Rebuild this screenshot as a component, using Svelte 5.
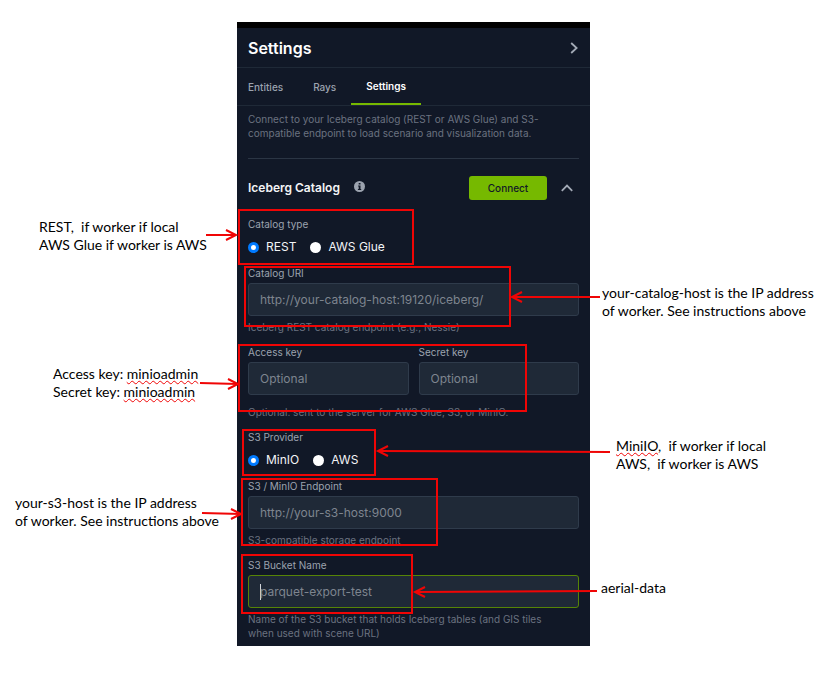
<script lang="ts">
  type Note = {
    id: string,
    offset: number,
    top: number,
    lines: { text: string, misspelt?: boolean }[][]
  }

  const tabs = ['Entities', 'Rays', 'Settings'];
  let activeTab = $state('Settings');
  let open = $state(true);

  let catalogType = $state('rest');
  let provider = $state('minio');
  let catalogUri = $state('');
  let accessKey = $state('');
  let secretKey = $state('');
  let endpoint = $state('');
  let bucket = $state('');

  // all marks are measured from the top left corner of the panel
  const boxes = [
    { x: 2, y: 188, w: 174, h: 54 },
    { x: 8, y: 245, w: 265, h: 59 },
    { x: 2, y: 323, w: 287, h: 66 },
    { x: 6, y: 408, w: 132, h: 45 },
    { x: 5, y: 457, w: 195, h: 66 },
    { x: 5, y: 533, w: 170, h: 58 }
  ];

  const arrows = [
    { from: [-31, 213], to: [-1, 213] },
    { from: [363, 275], to: [275, 275] },
    { from: [-37, 361], to: [1, 362] },
    { from: [373, 430], to: [141, 429] },
    { from: [-35, 491], to: [4, 492] },
    { from: [360, 569], to: [178, 570] }
  ];

  const notes: Note[] = [
    { id: 'type', offset: -198, top: 196, lines: [[{ text: 'REST,  if worker if local' }], [{ text: 'AWS Glue if worker is AWS' }]] },
    { id: 'keys', offset: -184, top: 343, lines: [[{ text: 'Access key: ' }, { text: 'minioadmin', misspelt: true }], [{ text: 'Secret key: ' }, { text: 'minioadmin', misspelt: true }]] },
    { id: 's3', offset: -222, top: 472, lines: [[{ text: 'your-s3-host is the IP address' }], [{ text: 'of worker. See instructions above' }]] },
    { id: 'uri', offset: 365, top: 262, lines: [[{ text: 'your-catalog-host is the IP address' }], [{ text: 'of worker. See instructions above' }]] },
    { id: 'provider', offset: 379, top: 415, lines: [[{ text: 'MiniIO', misspelt: true }, { text: ',  if worker if local' }], [{ text: 'AWS,  if worker is AWS' }]] },
    { id: 'bucket', offset: 364, top: 557, lines: [[{ text: 'aerial-data' }]] }
  ];

  function head (to: number[], from: number[]) {
    const back = to[0] > from[0] ? -10 : 10;
    return `M${to[0] + back} ${to[1] - 5}L${to[0]} ${to[1]}L${to[0] + back} ${to[1] + 5}`;
  }
</script>

<main class="figure">
  <section class="panel">
    <header class="header">
      <h1>Settings</h1>
      <button class="icon_button" aria-label="Collapse panel">
        <svg width="8" height="12" viewBox="0 0 8 12"><path d="M1.2 1L6.6 6L1.2 11" /></svg>
      </button>
    </header>

    <nav class="tabs">
      {#each tabs as tab (tab)}
      <button class="tab" class:active={activeTab === tab} onclick={() => activeTab = tab}>{tab}</button>
      {/each}
    </nav>

    <div class="body">
      <p class="help intro">Connect to your Iceberg catalog (REST or AWS Glue) and S3-compatible endpoint to load scenario and visualization data.</p>

      <div class="section_head">
        <h2>Iceberg Catalog</h2>
        <svg class="info" width="11" height="11" viewBox="0 0 11 11">
          <circle cx="5.5" cy="5.5" r="5.5" />
          <path d="M4.7 2h1.8v1.5H4.7zM4.1 4.5h2.4v3.4h.7v1H3.9v-1h.8V5.5h-.6z" />
        </svg>
        <button class="connect">Connect</button>
        <button class="icon_button" aria-label="Toggle section" onclick={() => open = !open}>
          <svg width="12" height="8" viewBox="0 0 12 8"><path d="M.8 6.8L6 1.6L11.2 6.8" /></svg>
        </button>
      </div>

      {#if open}
      <form class="fields">
        <fieldset>
          <legend>Catalog type</legend>
          <div class="radios">
            <label><input type="radio" name="catalogType" value="rest" bind:group={catalogType}>REST</label>
            <label><input type="radio" name="catalogType" value="glue" bind:group={catalogType}>AWS Glue</label>
          </div>
        </fieldset>

        <div class="field">
          <label for="uri">Catalog URI</label>
          <input type="text" id="uri" placeholder="http://your-catalog-host:19120/iceberg/" bind:value={catalogUri}>
          <p class="help">Iceberg REST catalog endpoint (e.g., Nessie)</p>
        </div>

        <div class="keys">
          <div class="pair">
            <div class="field">
              <label for="access">Access key</label>
              <input type="text" id="access" placeholder="Optional" bind:value={accessKey}>
            </div>
            <div class="field">
              <label for="secret">Secret key</label>
              <input type="text" id="secret" placeholder="Optional" bind:value={secretKey}>
            </div>
          </div>
          <p class="help">Optional: sent to the server for AWS Glue, S3, or MinIO.</p>
        </div>

        <fieldset>
          <legend>S3 Provider</legend>
          <div class="radios">
            <label><input type="radio" name="provider" value="minio" bind:group={provider}>MinIO</label>
            <label><input type="radio" name="provider" value="aws" bind:group={provider}>AWS</label>
          </div>
        </fieldset>

        <div class="field">
          <label for="endpoint">S3 / MinIO Endpoint</label>
          <input type="text" id="endpoint" placeholder="http://your-s3-host:9000" bind:value={endpoint}>
          <p class="help">S3-compatible storage endpoint</p>
        </div>

        <div class="field">
          <label for="bucket">S3 Bucket Name</label>
          <input type="text" id="bucket" class="current" placeholder="parquet-export-test" bind:value={bucket}>
          <p class="help">Name of the S3 bucket that holds Iceberg tables (and GIS tiles when used with scene URL)</p>
        </div>
      </form>
      {/if}
    </div>
  </section>

  <svg class="marks" aria-hidden="true">
    {#each boxes as box}
    <rect x={box.x} y={box.y} width={box.w} height={box.h} />
    {/each}
    {#each arrows as { from, to }}
    <path d={`M${from[0]} ${from[1]}L${to[0]} ${to[1]}`} />
    <path d={head(to, from)} />
    {/each}
  </svg>

  {#each notes as note (note.id)}
  <p class="note" style="left: {note.offset}px; top: {note.top}px">
    {#each note.lines as line}
    <span class="line">{#each line as part}<span class:misspelt={part.misspelt}>{part.text}</span>{/each}</span>
    {/each}
  </p>
  {/each}
</main>

<style>
  :global(body) {
    background: #fff;
  }

  .figure {
    position: relative;
    width: 100%;
    max-width: 353px;
    margin: 22px auto 0;
    font-family: Inter, "Liberation Sans", sans-serif;
  }

  .panel {
    border-top: 6px solid #000;
    background: #111827;
    color: #fff;
  }

  h1, h2, p, fieldset, legend {
    margin: 0;
    padding: 0;
    border: 0;
  }

  button {
    padding: 0;
    border: 0;
    background: none;
    font-family: inherit;
    cursor: pointer;
  }

  .header {
    display: flex;
    align-items: center;
    justify-content: space-between;
    height: 39px;
    padding: 0 12px 0 11px;
    border-bottom: 1px solid #1f2937;
  }

  h1 {
    font-size: 16px;
    line-height: 20px;
    font-weight: 600;
  }

  .icon_button {
    display: flex;
  }

  .icon_button path {
    fill: none;
    stroke: #a3aab6;
    stroke-width: 1.8;
  }

  .tabs {
    display: flex;
    height: 37px;
    padding-left: 11px;
    border-bottom: 1px solid #1f2937;
  }

  .tab {
    padding: 0 15px;
    color: #9ca3af;
    font-size: 10px;
    font-weight: 500;
  }

  .tab:first-child {
    padding-left: 0;
  }

  .tab.active {
    border-bottom: 2px solid #76b900;
    color: #fff;
    font-weight: 600;
  }

  .body {
    padding: 6px 11px;
  }

  .help {
    padding-right: 14px;
    color: #6b7280;
    font-size: 10px;
    line-height: 14px;
  }

  .intro {
    padding-bottom: 18px;
    border-bottom: 1px solid #2b3544;
  }

  .section_head {
    display: flex;
    align-items: center;
    padding: 17px 6px 17px 0;
  }

  h2 {
    font-size: 12px;
    line-height: 16px;
    font-weight: 600;
    color: #f3f4f6;
  }

  .info {
    margin: 0 auto 3px 14px;
  }

  .info circle {
    fill: #9ca3af;
  }

  .info path {
    fill: #111827;
  }

  .connect {
    width: 78px;
    height: 24px;
    margin-right: 14px;
    border-radius: 3px;
    background: #76b900;
    color: #111827;
    font-size: 10px;
    font-weight: 500;
  }

  .fields {
    display: flex;
    flex-direction: column;
    gap: 11px;
  }

  .field {
    display: flex;
    flex-direction: column;
    min-width: 0;
  }

  .field label, legend {
    color: #9ca3af;
    font-size: 10px;
    line-height: 14px;
  }

  .field .help {
    margin-top: 4px;
  }

  .keys .help {
    margin-top: 10px;
  }

  .radios {
    display: flex;
    gap: 14px;
    margin-top: 8px;
  }

  .radios label {
    display: flex;
    align-items: center;
    gap: 7px;
    color: #f3f4f6;
    font-size: 12px;
    line-height: 16px;
  }

  input[type="radio"] {
    appearance: none;
    width: 11px;
    height: 11px;
    margin: 0;
    border-radius: 50%;
    background: #fff;
  }

  input[type="radio"]:checked {
    border: 3px solid #007aff;
  }

  input[type="text"] {
    box-sizing: border-box;
    width: 100%;
    height: 33px;
    margin-top: 3px;
    padding: 0 11px;
    border: 1px solid #2f3b4b;
    border-radius: 3px;
    background: #1f2937;
    color: #fff;
    font-family: inherit;
    font-size: 12px;
    outline: none;
  }

  input[type="text"]::placeholder {
    color: #7e858f;
    opacity: 1;
  }

  input[type="text"].current {
    border-color: #568406;
    background: linear-gradient(#d1d5db, #d1d5db) 11px 8px / 1px 16px no-repeat #1f2937;
  }

  .pair {
    display: grid;
    grid-template-columns: 1fr 1fr;
    gap: 10px;
  }

  .marks {
    position: absolute;
    top: 0;
    left: 0;
    width: 100%;
    height: 100%;
    overflow: visible;
    pointer-events: none;
    fill: none;
    stroke: #f00505;
    stroke-width: 2;
  }

  .note {
    position: absolute;
    color: #000;
    font-family: Lato, "Liberation Sans", sans-serif;
    font-size: 14px;
    line-height: 18px;
    white-space: nowrap;
  }

  .line {
    display: block;
    white-space: pre;
  }

  .misspelt {
    text-decoration: underline wavy #f00505 1px;
    text-underline-offset: 1px;
  }
</style>
